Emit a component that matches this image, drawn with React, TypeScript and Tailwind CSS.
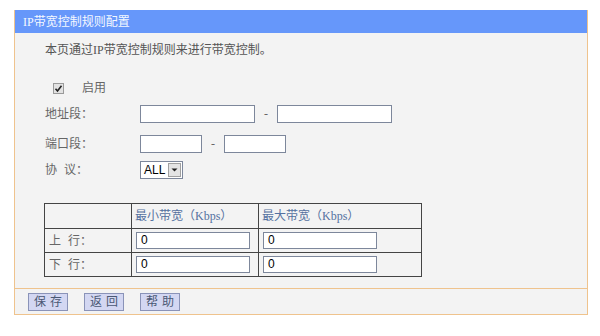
const font = { fontFamily: '"Liberation Serif", "Noto Sans CJK SC", serif' };

function TextBox({ w, h = 18, value = '' }: { w: number; h?: number; value?: string }) {
  return (
    <div
      className="border border-[#7d879b] bg-white pl-[4px] text-[12px] leading-[15px] text-black"
      style={{ width: w, height: h, fontFamily: '"Liberation Sans", Arial, sans-serif' }}
    >
      {value}
    </div>
  );
}

function Btn({ label }: { label: string }) {
  return (
    <div className="flex h-[18px] w-[40px] items-center justify-center border border-[#8a93b8] bg-[#d3d7f2] text-[12px] tracking-[4px] text-[#4a5874]">
      <span className="pl-[4px]">{label}</span>
    </div>
  );
}

// two-character label with a gap, e.g. "上 行："
function Spaced({ a, b }: { a: string; b: string }) {
  return (
    <span>
      <span className="mr-[7px]">{a}</span>
      {b}：
    </span>
  );
}

export default function App() {
  return (
    <div className="h-[336px] w-[600px] bg-white pl-[14px] pt-[10px] text-[12px]" style={font}>
      <div className="w-[574px] border-x border-b border-[#efc38d] bg-[#f3f3f3]">
        <div className="flex h-[23px] items-center bg-[#6697fa] pl-[8px] text-[12px] text-[#f4f7ff]">
          IP带宽控制规则配置
        </div>

        <div className="pl-[30px]">
          <div className="mt-[9px] h-[16px] leading-[16px] text-[#555]">
            本页通过IP带宽控制规则来进行带宽控制。
          </div>

          <div className="mt-[20px] flex h-[20px] items-center">
            <div className="ml-[8px] flex h-[11px] w-[11px] items-center justify-center border border-[#9a9a9a] bg-[#e2e2e2]">
              <svg width="9" height="9" viewBox="0 0 9 9">
                <path d="M1.5 4.8 L3.5 7 L7.5 1.8" fill="none" stroke="#222" strokeWidth="1.6" />
              </svg>
            </div>
            <span className="ml-[18px] text-[#666]">启用</span>
          </div>

          <div className="mt-[6px] flex h-[20px] items-center text-[#666]">
            <span className="w-[95px]">地址段：</span>
            <TextBox w={115} />
            <span className="w-[22px] text-center">-</span>
            <TextBox w={115} />
          </div>

          <div className="mt-[10px] flex h-[20px] items-center text-[#666]">
            <span className="w-[95px]">端口段：</span>
            <TextBox w={62} />
            <span className="w-[22px] text-center">-</span>
            <TextBox w={62} />
          </div>

          <div className="mt-[6px] flex h-[20px] items-center text-[#666]">
            <span className="w-[95px]">
              <Spaced a="协" b="议" />
            </span>
            <div className="flex h-[18px] w-[43px] items-center border border-[#7d879b] bg-white">
              <span className="pl-[3px] text-[12px] text-black" style={{ fontFamily: '"Liberation Sans", Arial, sans-serif' }}>
                ALL
              </span>
              <div className="ml-auto mr-[1px] flex h-[14px] w-[13px] items-center justify-center border border-[#a0a0a0] bg-[#e4e4e4]">
                <svg width="7" height="4" viewBox="0 0 7 4">
                  <path d="M0.5 0.5 L6.5 0.5 L3.5 3.5 Z" fill="#222" />
                </svg>
              </div>
            </div>
          </div>

          <table className="ml-[-1px] mt-[23px] border-collapse border border-[#444]">
            <tbody>
              <tr className="h-[25px]">
                <td className="w-[87px] border border-[#444]" />
                <td className="w-[127px] border border-[#444] pl-[3px] text-[#5571a0]">最小带宽（Kbps）</td>
                <td className="w-[163px] border border-[#444] pl-[3px] text-[#5571a0]">最大带宽（Kbps）</td>
              </tr>
              {['上', '下'].map((l) => (
                <tr key={l} className="h-[24px]">
                  <td className="border border-[#444] pl-[4px] text-[#666]">
                    <Spaced a={l} b="行" />
                  </td>
                  <td className="border border-[#444] pl-[4px]">
                    <TextBox w={114} h={17} value="0" />
                  </td>
                  <td className="border border-[#444] pl-[4px]">
                    <TextBox w={114} h={17} value="0" />
                  </td>
                </tr>
              ))}
            </tbody>
          </table>
        </div>

        <div className="mt-[11px] flex h-[26px] items-center gap-[16px] border-t border-[#efc38d] pl-[13px]">
          <Btn label="保存" />
          <Btn label="返回" />
          <Btn label="帮助" />
        </div>
      </div>
    </div>
  );
}
